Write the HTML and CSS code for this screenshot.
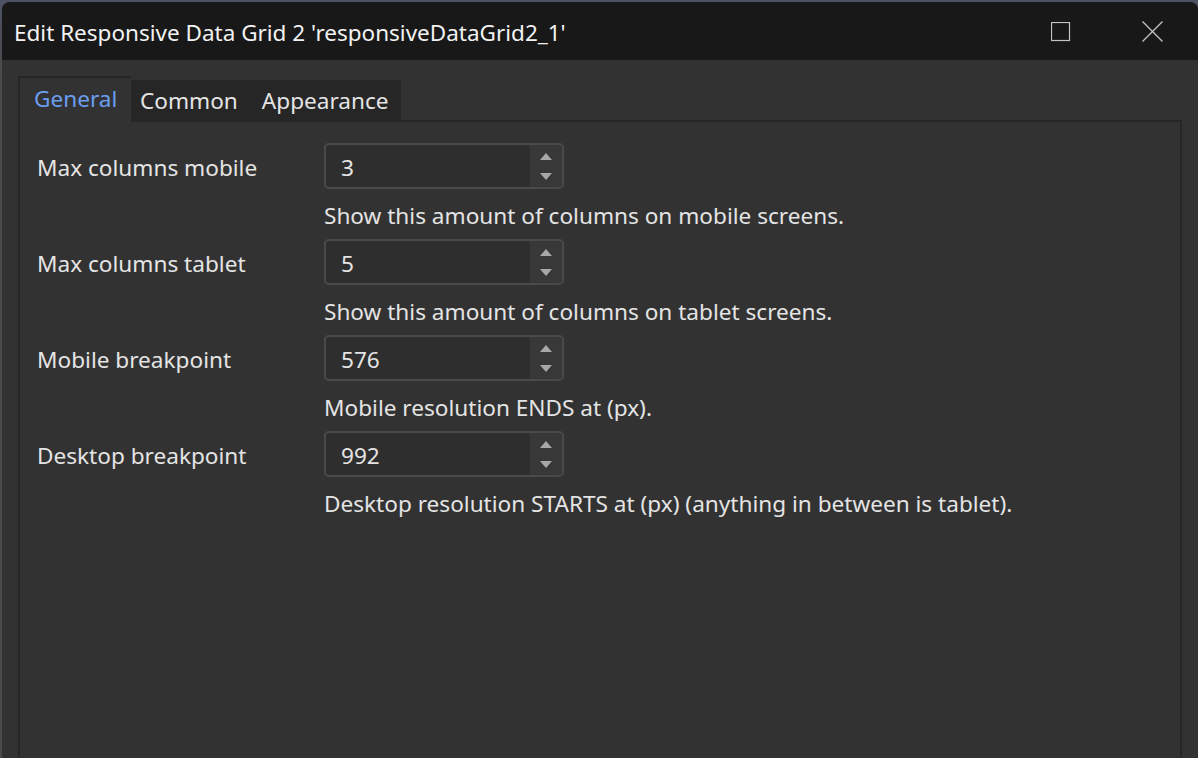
FILE: index.html
```html
<!DOCTYPE html>
<html lang="en">
<head>
<meta charset="utf-8">
<title>Edit Responsive Data Grid 2</title>
<link rel="stylesheet" href="styles.css">
</head>
<body>
<div class="window">
  <div class="titlebar">
    <div class="title">Edit Responsive Data Grid 2 'responsiveDataGrid2_1'</div>
    <div class="controls">
      <span class="ctl ctl-max"><svg width="20" height="20" viewBox="0 0 20 20"><rect x="0.5" y="0.5" width="18" height="18" fill="none" stroke="#c4c4c4" stroke-width="1.2"/></svg></span>
      <span class="ctl ctl-close"><svg width="21" height="21" viewBox="0 0 21 21"><path d="M0.5 0.5 L20.5 20.5 M20.5 0.5 L0.5 20.5" stroke="#c4c4c4" stroke-width="1.3" fill="none"/></svg></span>
    </div>
  </div>
  <div class="content">
    <div class="tabs">
      <div class="tab active">General</div>
      <div class="tab-group">
        <div class="tab">Common</div>
        <div class="tab">Appearance</div>
      </div>
    </div>
    <div class="panel">
      <div class="row">
        <div class="label">Max columns mobile</div>
        <div class="field">
          <div class="spin"><span class="val">3</span><span class="btns"><svg width="12" height="7" viewBox="0 0 12 7"><path d="M6 0 L12 7 L0 7 Z" fill="#a8a8a8"/></svg><svg width="12" height="7" viewBox="0 0 12 7"><path d="M0 0 L12 0 L6 7 Z" fill="#a8a8a8"/></svg></span></div>
          <div class="help">Show this amount of columns on mobile screens.</div>
        </div>
      </div>
      <div class="row">
        <div class="label">Max columns tablet</div>
        <div class="field">
          <div class="spin"><span class="val">5</span><span class="btns"><svg width="12" height="7" viewBox="0 0 12 7"><path d="M6 0 L12 7 L0 7 Z" fill="#a8a8a8"/></svg><svg width="12" height="7" viewBox="0 0 12 7"><path d="M0 0 L12 0 L6 7 Z" fill="#a8a8a8"/></svg></span></div>
          <div class="help">Show this amount of columns on tablet screens.</div>
        </div>
      </div>
      <div class="row">
        <div class="label">Mobile breakpoint</div>
        <div class="field">
          <div class="spin"><span class="val">576</span><span class="btns"><svg width="12" height="7" viewBox="0 0 12 7"><path d="M6 0 L12 7 L0 7 Z" fill="#a8a8a8"/></svg><svg width="12" height="7" viewBox="0 0 12 7"><path d="M0 0 L12 0 L6 7 Z" fill="#a8a8a8"/></svg></span></div>
          <div class="help">Mobile resolution ENDS at (px).</div>
        </div>
      </div>
      <div class="row">
        <div class="label">Desktop breakpoint</div>
        <div class="field">
          <div class="spin"><span class="val">992</span><span class="btns"><svg width="12" height="7" viewBox="0 0 12 7"><path d="M6 0 L12 7 L0 7 Z" fill="#a8a8a8"/></svg><svg width="12" height="7" viewBox="0 0 12 7"><path d="M0 0 L12 0 L6 7 Z" fill="#a8a8a8"/></svg></span></div>
          <div class="help">Desktop resolution STARTS at (px) (anything in between is tablet).</div>
        </div>
      </div>
    </div>
  </div>
</div>
</body>
</html>
```
FILE: styles.css
```css
* { box-sizing: border-box; }
html, body { margin: 0; padding: 0; }
body {
  width: 1198px;
  height: 758px;
  overflow: hidden;
  background: linear-gradient(180deg, #4d5163 0%, #4a4a4a 10%);
  font-family: "Noto Sans", "Open Sans", sans-serif;
  font-size: 22.6px;
  color: #e4e4e4;
}
.window {
  margin: 2px 0 0 2px;
  height: 756px;
  background: #323232;
  border-radius: 8px 8px 0 0;
  overflow: hidden;
  display: flex;
  flex-direction: column;
}
.titlebar {
  height: 58px;
  flex: none;
  background: #181818;
  display: flex;
  align-items: center;
  padding-left: 12px;
  padding-right: 35px;
}
.title {
  font-size: 22.5px;
  color: #f2f2f2;
  padding-top: 2px;
}
.controls {
  margin-left: auto;
  display: flex;
  align-items: center;
  gap: 71px;
}
.ctl { display: flex; }
.ctl-max { padding-top: 1px; }
.content {
  flex: 1;
  display: flex;
  flex-direction: column;
  padding: 16px 16px 0 16px;
}
.tabs {
  display: flex;
  align-items: flex-end;
  height: 44px;
  flex: none;
}
.tab {
  height: 40px;
  display: flex;
  align-items: center;
  color: #e4e4e4;
  white-space: nowrap;
}
.tab.active {
  height: 46px;
  width: 113px;
  margin-bottom: -2px;
  position: relative;
  z-index: 1;
  background: #323232;
  border: 2px solid #262626;
  border-bottom: none;
  border-right: none;
  padding: 0 0 4px 14px;
  color: #6b9ef0;
}
.tab-group {
  display: flex;
  background: #262626;
  height: 40px;
}
.tab-group .tab:first-child { padding: 0 12px 0 9px; }
.tab-group .tab:last-child { padding: 0 12px 0 12px; }
.panel {
  flex: 1;
  border: 2px solid #262626;
  border-bottom: none;
  padding: 21px 0 0 17px;
}
.row {
  display: grid;
  grid-template-columns: 287px 1fr;
}
.label {
  height: 46px;
  display: flex;
  align-items: center;
  padding-top: 2px;
  white-space: nowrap;
}
.field { display: flex; flex-direction: column; }
.spin {
  width: 240px;
  height: 46px;
  border: 2px solid #4a4a4a;
  border-radius: 5px;
  background: #2e2e2e;
  display: flex;
  overflow: hidden;
}
.val {
  flex: 1;
  display: flex;
  align-items: center;
  padding-left: 15px;
  padding-top: 2px;
}
.btns {
  width: 32px;
  background: #383838;
  display: flex;
  flex-direction: column;
  align-items: center;
  justify-content: center;
  gap: 13px;
  padding-top: 1px;
}
.btns svg { display: block; }
.help {
  line-height: 26px;
  margin: 14px 0 10px 0;
  white-space: nowrap;
}
```
